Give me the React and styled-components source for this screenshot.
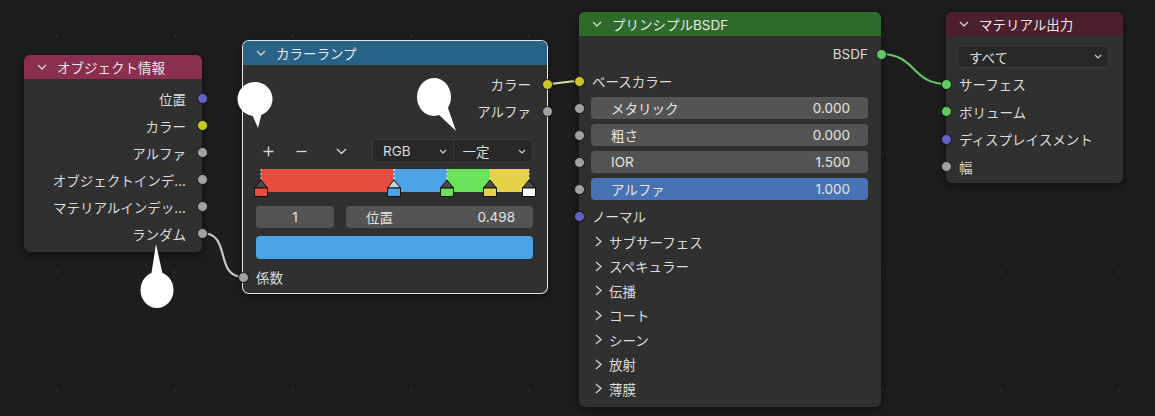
import React from 'react';
import styled, { createGlobalStyle } from 'styled-components';

const GlobalStyle = createGlobalStyle`
  html, body {
    margin: 0;
    padding: 0;
    background: #1d1d1d;
  }
  body {
    font-family: Inter, "Noto Sans CJK JP", "DejaVu Sans", sans-serif;
  }
`;

const SOCKET = {
  grey: '#a1a1a1',
  yellow: '#c7c729',
  purple: '#6363c7',
  green: '#63c763',
};

const RAMP_STOPS = [
  { pos: 0, color: '#e64d3f' },
  { pos: 0.496, color: '#4ba3e6', active: true },
  { pos: 0.694, color: '#68e35a' },
  { pos: 0.854, color: '#e6d24a' },
  { pos: 1, color: '#ffffff' },
];

const Canvas = styled.div`
  position: relative;
  width: 1155px;
  height: 416px;
  overflow: hidden;
  background-color: #1d1d1d;
  background-image: radial-gradient(circle, #2e2e2e 0.8px, transparent 1.3px);
  background-size: 118px 118px;
  background-position: -2px -23px;
`;

const Layer = styled.svg`
  position: absolute;
  left: 0;
  top: 0;
  width: 1155px;
  height: 416px;
  pointer-events: none;
  z-index: ${(p) => p.$z};
`;

const Node = styled.div`
  position: absolute;
  left: ${(p) => p.$x}px;
  top: ${(p) => p.$y}px;
  width: ${(p) => p.$w}px;
  z-index: 1;
  background: #303030;
  border-radius: 6px;
  color: #dcdcdc;
  font-size: 13.5px;
  box-shadow: ${(p) =>
    p.$active
      ? '0 0 0 1px #e6e6e6, 0 3px 8px rgba(0,0,0,0.5)'
      : '0 3px 8px rgba(0,0,0,0.5)'};
`;

const Header = styled.div`
  height: 24px;
  display: flex;
  align-items: center;
  gap: 10px;
  padding-left: 13px;
  background: ${(p) => p.$color};
  border-radius: 6px 6px 0 0;
  color: #e8e8e8;
`;

const Body = styled.div`
  display: flex;
  flex-direction: column;
  padding: ${(p) => p.$pad || '6px 0 5px'};
`;

const Row = styled.div`
  position: relative;
  height: ${(p) => p.$h || 27}px;
  display: flex;
  align-items: center;
  justify-content: ${(p) => (p.$out ? 'flex-end' : 'flex-start')};
  padding: ${(p) => (p.$out ? `0 ${p.$pr || 16}px 0 0` : '0 0 0 13px')};
  white-space: nowrap;
`;

const Socket = styled.span`
  position: absolute;
  top: 50%;
  ${(p) => (p.$out ? 'right: -5.5px;' : 'left: -5.5px;')}
  width: 9px;
  height: 9px;
  margin-top: -5.5px;
  border-radius: 50%;
  background: ${(p) => p.$color};
  border: 1px solid #161616;
`;

const Field = styled.div`
  flex: 1;
  height: 22px;
  margin-right: ${(p) => p.$mr || 0}px;
  display: flex;
  align-items: center;
  justify-content: ${(p) => (p.$center ? 'center' : 'space-between')};
  padding: ${(p) => (p.$center ? '0' : '0 18px 0 20px')};
  background: ${(p) => (p.$blue ? '#4772b3' : '#545454')};
  border-radius: 4px;
  color: #e4e4e4;
`;

const PanelRow = styled.div`
  height: 24.5px;
  display: flex;
  align-items: center;
  gap: 7px;
  padding-left: 16px;
`;

const Toolbar = styled.div`
  height: 24px;
  margin-top: 14.5px;
  display: flex;
  align-items: center;
  justify-content: space-between;
  padding: 0 14px 0 13px;
`;

const IconGroup = styled.div`
  display: grid;
  grid-template-columns: 25px 40px 40px;
  align-items: center;
  justify-items: center;
  color: #d8d8d8;
`;

const Dropdown = styled.div`
  width: ${(p) => p.$w}px;
  height: ${(p) => p.$h || 23}px;
  display: flex;
  background: #282828;
  border: 1px solid #3b3b3b;
  border-radius: 4px;
  box-sizing: border-box;
`;

const DropPart = styled.div`
  flex: 1;
  display: flex;
  align-items: center;
  justify-content: space-between;
  padding: 0 ${(p) => p.$pr || 6}px 0 ${(p) => p.$pl || 10}px;
  & + & {
    border-left: 1px solid #3b3b3b;
  }
`;

const DropRow = styled.div`
  height: 27.5px;
  display: flex;
  align-items: center;
  padding: 0 14px 0 11px;
`;

const Ramp = styled.div`
  position: relative;
  height: 28px;
  margin: 6px 18px 0 18px;
`;

const RampBar = styled.div`
  display: flex;
  height: 23px;
`;

const Marker = styled.div`
  position: absolute;
  top: 0;
  width: 14px;
  height: 28px;
  margin-left: -7px;
`;

const FieldRow = styled.div`
  display: flex;
  gap: 12px;
  height: 22px;
  margin: 9px 14px 0 13px;
`;

const Swatch = styled.div`
  height: 23px;
  margin: 8px 14px 0 13px;
  background: #4ba3e6;
  border-radius: 4px;
`;

function HeadChevron() {
  return (
    <svg width="10" height="6" viewBox="0 0 10 6">
      <polyline points="1,1 5,5 9,1" fill="none" stroke="#d6d6d6" strokeWidth="1.3" />
    </svg>
  );
}

function SmallChevron() {
  return (
    <svg width="8" height="5" viewBox="0 0 8 5">
      <polyline points="1,1 4,4 7,1" fill="none" stroke="#cfcfcf" strokeWidth="1.2" />
    </svg>
  );
}

function RightChevron() {
  return (
    <svg width="7" height="11" viewBox="0 0 7 11">
      <polyline points="1,1 6,5.5 1,10" fill="none" stroke="#d0d0d0" strokeWidth="1.3" />
    </svg>
  );
}

function StopMarker({ color, active }) {
  return (
    <svg width="14" height="28" viewBox="0 0 14 28">
      <line x1="7" y1="0" x2="7" y2="11" stroke={active ? '#ffffff' : '#dddddd'} strokeWidth="1" strokeDasharray="2 2" />
      <polygon points="7,11 0.5,19 13.5,19" fill={active ? '#cfcfcf' : '#4a4a4a'} stroke="#111" strokeWidth="1" />
      <rect x="0.5" y="19" width="13" height="8.5" fill={color} stroke="#111" strokeWidth="1" />
    </svg>
  );
}

function ObjectInfo() {
  const outs = [
    ['位置', SOCKET.purple],
    ['カラー', SOCKET.yellow],
    ['アルファ', SOCKET.grey],
    ['オブジェクトインデ...', SOCKET.grey],
    ['マテリアルインデッ...', SOCKET.grey],
    ['ランダム', SOCKET.grey],
  ];
  return (
    <Node $x={24} $y={55} $w={178}>
      <Header $color="#8a2f4f">
        <HeadChevron />
        オブジェクト情報
      </Header>
      <Body>
        {outs.map(([label, c]) => (
          <Row key={label} $out>
            {label}
            <Socket $out $color={c} />
          </Row>
        ))}
      </Body>
    </Node>
  );
}

function ColorRamp() {
  return (
    <Node $x={243} $y={41} $w={304} $active>
      <Header $color="#276287">
        <HeadChevron />
        カラーランプ
      </Header>
      <Body $pad="5.5px 0 2.5px">
        <Row $out>
          カラー
          <Socket $out $color={SOCKET.yellow} />
        </Row>
        <Row $out>
          アルファ
          <Socket $out $color={SOCKET.grey} />
        </Row>
        <Toolbar>
          <IconGroup>
            <svg width="11" height="11" viewBox="0 0 11 11">
              <path d="M5.5 0.5v10M0.5 5.5h10" stroke="#d8d8d8" strokeWidth="1.3" />
            </svg>
            <svg width="11" height="11" viewBox="0 0 11 11">
              <path d="M0.5 5.5h10" stroke="#d8d8d8" strokeWidth="1.3" />
            </svg>
            <svg width="11" height="7" viewBox="0 0 11 7">
              <polyline points="1,1 5.5,5.5 10,1" fill="none" stroke="#d8d8d8" strokeWidth="1.3" />
            </svg>
          </IconGroup>
          <Dropdown $w={161} $h={24}>
            <DropPart>
              RGB
              <SmallChevron />
            </DropPart>
            <DropPart $pl={9}>
              一定
              <SmallChevron />
            </DropPart>
          </Dropdown>
        </Toolbar>
        <Ramp>
          <RampBar>
            {RAMP_STOPS.slice(0, -1).map((s, i) => (
              <div
                key={s.color}
                style={{
                  background: s.color,
                  width: `${(RAMP_STOPS[i + 1].pos - s.pos) * 100}%`,
                }}
              />
            ))}
          </RampBar>
          {RAMP_STOPS.map((s) => (
            <Marker key={s.color} style={{ left: `${s.pos * 100}%` }}>
              <StopMarker color={s.color} active={s.active} />
            </Marker>
          ))}
        </Ramp>
        <FieldRow>
          <Field $center style={{ flex: '0 0 78px' }}>1</Field>
          <Field>
            <span>位置</span>
            <span>0.498</span>
          </Field>
        </FieldRow>
        <Swatch />
        <Row style={{ marginTop: 4.5 }}>
          係数
          <Socket $color={SOCKET.grey} />
        </Row>
      </Body>
    </Node>
  );
}

function PrincipledBSDF() {
  const fields = [
    ['メタリック', '0.000'],
    ['粗さ', '0.000'],
    ['IOR', '1.500'],
    ['アルファ', '1.000', true],
  ];
  const panels = ['サブサーフェス', 'スペキュラー', '伝播', 'コート', 'シーン', '放射', '薄膜'];
  return (
    <Node $x={579} $y={12} $w={302}>
      <Header $color="#2e6a29">
        <HeadChevron />
        プリンシプルBSDF
      </Header>
      <Body $pad="4.5px 0 6px">
        <Row $out $pr={13}>
          BSDF
          <Socket $out $color={SOCKET.green} />
        </Row>
        <Row>
          ベースカラー
          <Socket $color={SOCKET.yellow} />
        </Row>
        {fields.map(([label, value, blue]) => (
          <Row key={label} style={{ paddingLeft: 12 }}>
            <Socket $color={SOCKET.grey} />
            <Field $blue={blue} $mr={13}>
              <span>{label}</span>
              <span>{value}</span>
            </Field>
          </Row>
        ))}
        <Row>
          ノーマル
          <Socket $color={SOCKET.purple} />
        </Row>
        {panels.map((p) => (
          <PanelRow key={p}>
            <RightChevron />
            {p}
          </PanelRow>
        ))}
      </Body>
    </Node>
  );
}

function MaterialOutput() {
  const ins = [
    ['サーフェス', SOCKET.green],
    ['ボリューム', SOCKET.green],
    ['ディスプレイスメント', SOCKET.purple],
    ['幅', SOCKET.grey],
  ];
  return (
    <Node $x={946} $y={12} $w={177}>
      <Header $color="#4b1f2c">
        <HeadChevron />
        マテリアル出力
      </Header>
      <Body $pad="7px 0 2px">
        <DropRow>
          <Dropdown $w={152}>
            <DropPart $pl={11}>
              すべて
              <SmallChevron />
            </DropPart>
          </Dropdown>
        </DropRow>
        {ins.map(([label, c]) => (
          <Row key={label} $h={27.5}>
            {label}
            <Socket $color={c} />
          </Row>
        ))}
      </Body>
    </Node>
  );
}

function Links() {
  return (
    <Layer $z={0}>
      <path d="M202 233 C232 233 214 277 243 277" fill="none" stroke="#c8c8c8" strokeWidth="2.2" />
      <path d="M547 84 C562 84 563 81 579 81" fill="none" stroke="#dcdca4" strokeWidth="2.2" />
      <path d="M881 54 C916 54 912 84 946 84" fill="none" stroke="#66c466" strokeWidth="2.2" />
    </Layer>
  );
}

function Bubbles() {
  return (
    <Layer $z={2}>
      <g fill="#ffffff">
        <ellipse cx="255" cy="99" rx="17.5" ry="17" />
        <polygon points="251,112 262,112 258,128" />
        <ellipse cx="434" cy="97" rx="17" ry="19" />
        <polygon points="436,112 448,108 456,131" />
        <ellipse cx="157" cy="290" rx="16.5" ry="18" />
        <polygon points="151,276 163,276 156,244" />
      </g>
    </Layer>
  );
}

export default function App() {
  return (
    <>
      <GlobalStyle />
      <Canvas>
        <Links />
        <ObjectInfo />
        <ColorRamp />
        <PrincipledBSDF />
        <MaterialOutput />
        <Bubbles />
      </Canvas>
    </>
  );
}
